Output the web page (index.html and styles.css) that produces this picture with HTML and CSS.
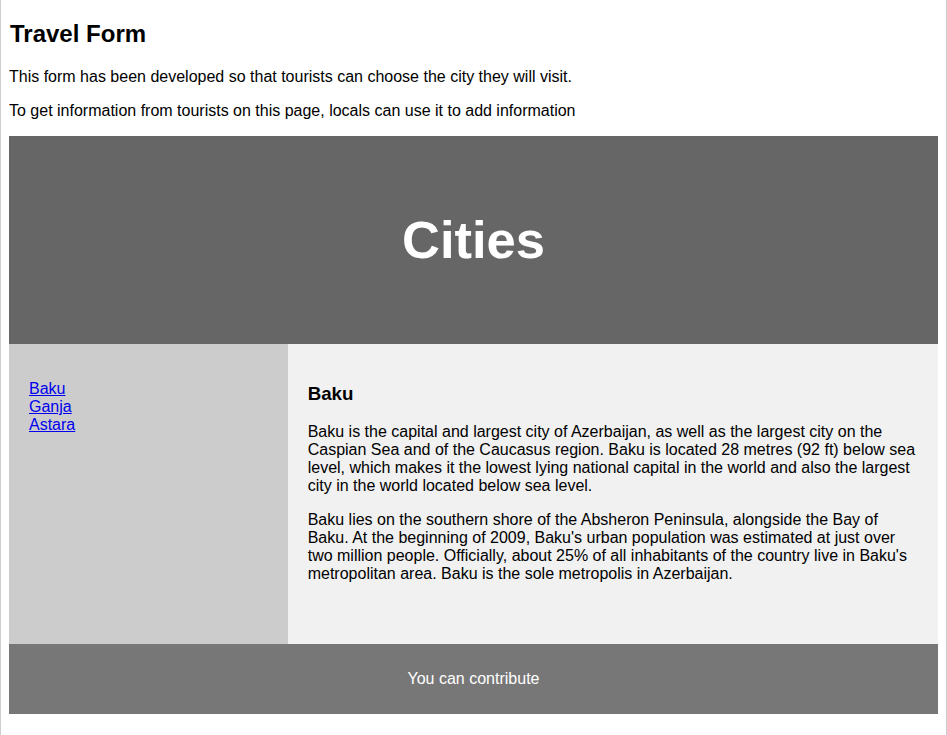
FILE: index.html
```html
<!DOCTYPE html>
<html>
<head>
<meta charset="utf-8">
<title>Travel Form</title>
<link rel="stylesheet" href="styles.css">
</head>
<body>
<h2 class="title">Travel Form</h2>
<p>This form has been developed so that tourists can choose the city they will visit.</p>
<p>To get information from tourists on this page, locals can use it to add information</p>

<header class="hero">
  <h2>Cities</h2>
</header>

<section class="main">
  <nav class="side">
    <ul>
      <li><a href="#">Baku</a></li>
      <li><a href="#">Ganja</a></li>
      <li><a href="#">Astara</a></li>
    </ul>
  </nav>
  <article class="content">
    <h3>Baku</h3>
    <p>Baku is the capital and largest city of Azerbaijan, as well as the largest city on the Caspian Sea and of the Caucasus region. Baku is located 28 metres (92 ft) below sea level, which makes it the lowest lying national capital in the world and also the largest city in the world located below sea level.</p>
    <p>Baku lies on the southern shore of the Absheron Peninsula, alongside the Bay of Baku. At the beginning of 2009, Baku's urban population was estimated at just over two million people. Officially, about 25% of all inhabitants of the country live in Baku's metropolitan area. Baku is the sole metropolis in Azerbaijan.</p>
  </article>
</section>

<footer class="foot">
  <p>You can contribute</p>
</footer>
</body>
</html>
```

FILE: styles.css
```css
* {
  box-sizing: border-box;
}

html {
  min-height: 100%;
  border-left: 1px solid #cdcdcd;
  border-right: 1px solid #cdcdcd;
  background: #fff;
}

body {
  margin: 8px;
  font-family: "Liberation Sans", Arial, Helvetica, sans-serif;
  color: #000;
}

.title {
  margin-top: 12px;
  padding-left: 1px;
}

.hero {
  background-color: #666;
  padding: 30px;
  text-align: center;
  font-size: 35px;
  color: #fff;
}

.main {
  display: flex;
}

.side {
  width: 30%;
  height: 300px;
  background: #ccc;
  padding: 20px;
}

.side ul {
  list-style-type: none;
  padding: 0;
}

.content {
  width: 70%;
  height: 300px;
  padding: 20px;
  background-color: #f1f1f1;
}

.foot {
  background-color: #777;
  padding: 10px;
  text-align: center;
  color: #fff;
}
```
